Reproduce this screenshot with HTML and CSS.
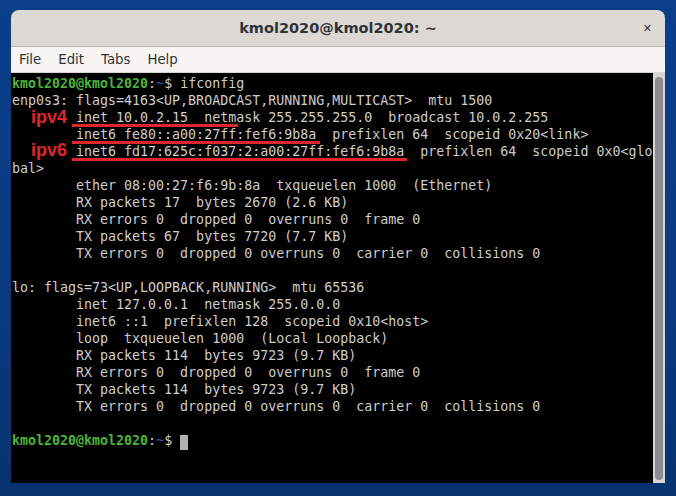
FILE: index.html
```html
<!DOCTYPE html>
<html lang="en">
<head>
    <meta charset="UTF-8">
    <meta name="viewport" content="width=device-width, initial-scale=1.0">
    <link rel="stylesheet" href="styles.css">
</head>
<body>
    <div class="window">
        <div class="titlebar">
            <span></span>
            <span class="title">kmol2020@kmol2020: ~</span>
            <span class="close">&#x2715;</span>
        </div>
        <div class="menubar">
            <span>File</span>
            <span>Edit</span>
            <span>Tabs</span>
            <span>Help</span>
        </div>
        <div class="terminal">
            <div class="screen">
<pre><span class="user">kmol2020@kmol2020</span>:<span class="path">~</span>$ ifconfig
enp0s3: flags=4163&lt;UP,BROADCAST,RUNNING,MULTICAST&gt;  mtu 1500
        inet 10.0.2.15  netmask 255.255.255.0  broadcast 10.0.2.255
        inet6 fe80::a00:27ff:fef6:9b8a  prefixlen 64  scopeid 0x20&lt;link&gt;
        inet6 fd17:625c:f037:2:a00:27ff:fef6:9b8a  prefixlen 64  scopeid 0x0&lt;glo
bal&gt;
        ether 08:00:27:f6:9b:8a  txqueuelen 1000  (Ethernet)
        RX packets 17  bytes 2670 (2.6 KB)
        RX errors 0  dropped 0  overruns 0  frame 0
        TX packets 67  bytes 7720 (7.7 KB)
        TX errors 0  dropped 0 overruns 0  carrier 0  collisions 0

lo: flags=73&lt;UP,LOOPBACK,RUNNING&gt;  mtu 65536
        inet 127.0.0.1  netmask 255.0.0.0
        inet6 ::1  prefixlen 128  scopeid 0x10&lt;host&gt;
        loop  txqueuelen 1000  (Local Loopback)
        RX packets 114  bytes 9723 (9.7 KB)
        RX errors 0  dropped 0  overruns 0  frame 0
        TX packets 114  bytes 9723 (9.7 KB)
        TX errors 0  dropped 0 overruns 0  carrier 0  collisions 0

<span class="user">kmol2020@kmol2020</span>:<span class="path">~</span>$ <span class="cursor"> </span></pre>

                <!-- anotações em vermelho -->
                <span class="label label-v4">ipv4</span>
                <span class="label label-v6">ipv6</span>
                <div class="mark mark-1"></div>
                <div class="mark mark-2"></div>
                <div class="mark mark-3"></div>
            </div>
            <div class="scrollbar"><div class="thumb"></div></div>
        </div>
    </div>
</body>
</html>
```

FILE: styles.css
```css
/* Fundo da área de trabalho */
body {
    margin: 0;
    height: 496px;
    box-sizing: border-box;
    padding: 10px 11px 0;
    background: linear-gradient(180deg, #0b3f8b 0%, #093a80 60%, #07336f 100%);
    overflow: hidden;
}

.window {
    width: 654px;
    border-radius: 8px 8px 0 0;
    overflow: hidden;
    font-family: "DejaVu Sans", sans-serif;
    color: #2e3436;
}

/* Barra de título */
.titlebar {
    height: 36px;
    display: grid;
    grid-template-columns: 1fr auto 1fr;
    align-items: center;
    background: #dcd9d5;
    border-bottom: 1px solid #bdb8b3;
}

.title {
    font-size: 14.5px;
    font-weight: bold;
}

.close {
    justify-self: end;
    padding-right: 13px;
    font-size: 11px;
    font-weight: bold;
    color: #2e3436;
}

/* Menu */
.menubar {
    height: 25px;
    display: flex;
    align-items: center;
    gap: 17px;
    padding-left: 8px;
    background: #f6f5f4;
    border-bottom: 1px solid #d8d4d0;
    font-size: 13.3px;
}

/* Terminal */
.terminal {
    display: flex;
    height: 410px;
    background: #000;
}

.screen {
    flex: 1;
    position: relative;
    padding: 2px 0 0 1px;
}

.screen pre {
    margin: 0;
    font-family: "DejaVu Sans Mono", monospace;
    font-size: 13.3px;
    line-height: 17px;
    color: #cdcdcd;
}

.user {
    color: #4db337;
    font-weight: bold;
}

.path {
    color: #2f56b0;
}

.cursor {
    display: inline-block;
    width: 8px;
    height: 15px;
    vertical-align: -3px;
    background: #b0b0b0;
}

.scrollbar {
    width: 12px;
    padding: 4px 2px 3px;
    box-sizing: border-box;
    background: #d6d6d6;
}

.thumb {
    height: 100%;
    border-radius: 4px;
    background: #8b8d8e;
}

/* Anotações */
.label {
    position: absolute;
    left: 20px;
    font-family: "Liberation Sans", Arial, sans-serif;
    font-size: 18px;
    font-weight: bold;
    line-height: 19px;
    color: #e0262c;
}

.label-v4 { top: 35px; }
.label-v6 { top: 68px; }

.mark {
    position: absolute;
    left: 61px;
    height: 3px;
    background: #e0262c;
}

.mark-1 { top: 51px; width: 166px; }
.mark-2 { top: 68px; width: 248px; }
.mark-3 { top: 85px; width: 335px; }
```
